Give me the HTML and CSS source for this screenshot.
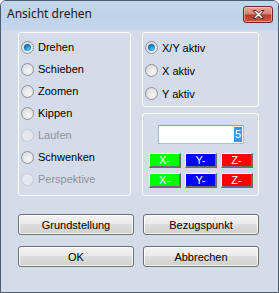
FILE: index.html
```html
<!DOCTYPE html>
<html>
<head>
<meta charset="utf-8">
<link rel="stylesheet" href="styles.css">
</head>
<body>
<div class="window">
  <div class="titlebar">
    <span class="title">Ansicht drehen</span>
    <div class="close">
      <svg width="15" height="11" viewBox="0 0 15 11">
        <path d="M2 1.5 L5 1.5 L7.5 4 L10 1.5 L13 1.5 L9.2 5.5 L13 9.5 L10 9.5 L7.5 7 L5 9.5 L2 9.5 L5.8 5.5 Z" fill="#fff" stroke="#4a2a2a" stroke-width="1" stroke-linejoin="round"/>
      </svg>
    </div>
  </div>
  <div class="client">
    <div class="top">
      <div class="group left-group">
        <div class="radio checked"><span class="dot"></span><span>Drehen</span></div>
        <div class="radio"><span class="dot"></span><span>Schieben</span></div>
        <div class="radio"><span class="dot"></span><span>Zoomen</span></div>
        <div class="radio"><span class="dot"></span><span>Kippen</span></div>
        <div class="radio disabled"><span class="dot"></span><span>Laufen</span></div>
        <div class="radio"><span class="dot"></span><span>Schwenken</span></div>
        <div class="radio disabled"><span class="dot"></span><span>Perspektive</span></div>
      </div>
      <div class="right-col">
        <div class="group axis-group">
          <div class="radio r23 checked"><span class="dot"></span><span>X/Y aktiv</span></div>
          <div class="radio r23"><span class="dot"></span><span>X aktiv</span></div>
          <div class="radio r23"><span class="dot"></span><span>Y aktiv</span></div>
        </div>
        <div class="group step-group">
          <div class="input"><span class="sel">5</span></div>
          <div class="keys">
            <div class="key green">X-</div>
            <div class="key blue">Y-</div>
            <div class="key red">Z-</div>
            <div class="key green">X-</div>
            <div class="key blue">Y-</div>
            <div class="key red">Z-</div>
          </div>
        </div>
      </div>
    </div>
    <div class="buttons">
      <div class="btn">Grundstellung</div>
      <div class="btn">Bezugspunkt</div>
      <div class="btn">OK</div>
      <div class="btn">Abbrechen</div>
    </div>
  </div>
</div>
</body>
</html>
```
FILE: styles.css
```css
* { box-sizing: border-box; }
html, body { margin: 0; padding: 0; background: #fff; }
body { width: 279px; height: 293px; overflow: hidden; }

.window {
  width: 279px;
  height: 293px;
  border: 1px solid #4d5b6e;
  border-radius: 6px 6px 0 0;
  background: #d4dcea;
  display: flex;
  flex-direction: column;
  font-family: "Liberation Sans", Arial, sans-serif;
  font-size: 11px;
  color: #000;
}

.titlebar {
  height: 30px;
  flex: none;
  display: flex;
  align-items: flex-start;
  justify-content: space-between;
  padding: 4px 5px 0 6px;
  background: linear-gradient(#c2d6ec, #bfd3ea 60%, #c9d8ea);
  border-radius: 5px 5px 0 0;
}
.title {
  font-family: "Noto Sans", "DejaVu Sans", sans-serif;
  font-size: 12px;
  line-height: 18px;
  color: #1a1a1a;
}
.close {
  width: 30px;
  height: 17px;
  margin-top: 1px;
  border: 1px solid #6d2a22;
  border-radius: 3px;
  background: linear-gradient(#e7a89c, #d6806f 45%, #c0392a 55%, #cf5a3e);
  display: flex;
  align-items: center;
  justify-content: center;
  box-shadow: inset 0 0 0 1px rgba(255,220,210,0.5);
}
.close svg { display: block; }

.client {
  flex: 1;
  padding: 1px 19px 0 17px;
  display: flex;
  flex-direction: column;
}

.top {
  display: flex;
  gap: 11px;
  height: 164px;
}

.group {
  border: 1px solid #fbfcfe;
  border-radius: 3px;
}

.left-group {
  width: 113px;
  height: 164px;
  padding: 3px 0 0 2px;
}

.right-col {
  width: 117px;
  display: flex;
  flex-direction: column;
  gap: 6px;
}
.axis-group {
  height: 75px;
  padding: 3px 0 0 2px;
}
.step-group {
  height: 83px;
  padding: 11px 0 0 6px;
}

.radio {
  height: 22px;
  display: flex;
  align-items: center;
  gap: 4px;
  white-space: nowrap;
}
.radio.r23 { height: 23px; }
.radio .dot {
  width: 13px;
  height: 13px;
  flex: none;
  border-radius: 50%;
  border: 1px solid #8f9398;
  background: radial-gradient(circle at 60% 65%, #f6f6f6 0%, #e2e3e4 55%, #cfd1d3 100%);
  position: relative;
}
.radio.checked .dot::after {
  content: "";
  position: absolute;
  left: 2px;
  top: 2px;
  width: 7px;
  height: 7px;
  border-radius: 50%;
  background: radial-gradient(circle at 60% 70%, #4fc9f5 0%, #1a80c2 50%, #0b3e6e 100%);
}
.radio.disabled { color: #8e9297; }
.radio.disabled .dot {
  border-color: #c4c9cf;
  background: #e4e8ee;
}

.input {
  width: 86px;
  height: 19px;
  margin-left: 9px;
  background: #fff;
  border: 1px solid #a6bcd6;
  border-top-color: #7ea3cc;
  display: flex;
  justify-content: flex-end;
  align-items: center;
  padding-right: 1px;
}
.input .sel {
  background: #3399ff;
  color: #fff;
  line-height: 15px;
  padding: 0 1px;
}

.keys {
  margin-top: 9px;
  display: grid;
  grid-template-columns: repeat(3, 32px);
  grid-auto-rows: 15px;
  column-gap: 4px;
  row-gap: 5px;
}
.key {
  color: #fff;
  text-align: center;
  line-height: 13px;
  font-size: 11px;
  border-top: 1px solid #ffffff;
  border-left: 1px solid #ffffff;
  border-right: 2px solid #6d6d6d;
  border-bottom: 2px solid #6d6d6d;
}
.key.green { background: #00ff00; }
.key.blue { background: #0000ff; }
.key.red { background: #ff0000; }

.buttons {
  margin-top: 18px;
  display: grid;
  grid-template-columns: 116px 116px;
  grid-auto-rows: 21px;
  column-gap: 9px;
  row-gap: 11px;
}
.btn {
  border: 1px solid #707070;
  border-radius: 3px;
  background: linear-gradient(#f3f3f3 0%, #ebebeb 49%, #dddddd 50%, #cfcfcf 100%);
  box-shadow: inset 0 0 0 1px rgba(255,255,255,0.8);
  display: flex;
  align-items: center;
  justify-content: center;
  color: #000;
}
```
